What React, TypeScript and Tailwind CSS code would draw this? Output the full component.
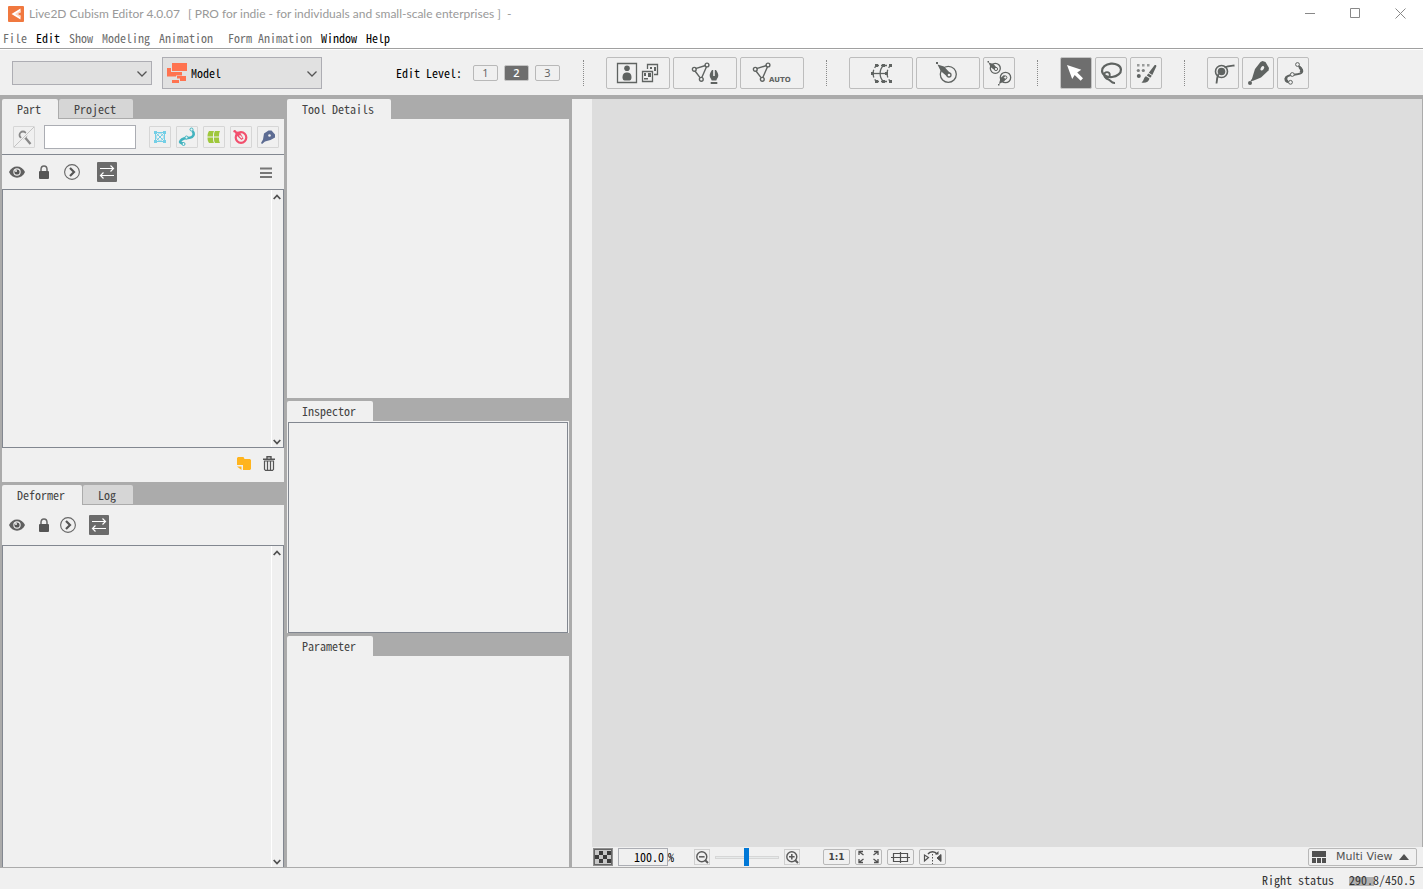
import type { ReactNode } from "react";

const MONO = "font-['Noto_Sans_Mono_CJK_JP','Noto_Sans_CJK_JP',monospace]";
const INK = "#5f6361";

function Glyph({ w, h, children, className = "" }: { w: number; h: number; children: ReactNode; className?: string }) {
  return (
    <svg width={w} height={h} viewBox={`0 0 ${w} ${h}`} fill="none" aria-hidden="true" className={`shrink-0 ${className}`}>
      {children}
    </svg>
  );
}

/* ---------- title bar and menu ---------- */

function TitleBar() {
  return (
    <header className="flex h-[27px] items-center bg-white pl-2 font-['Lato',sans-serif] text-xs text-[#999]">
      <Glyph w={16} h={16}>
        <rect width="16" height="16" rx="1" fill="#f0783f" />
        <path d="M3.500 8 12.500 2.500v4L9 8l3.500 1.500v4z" fill="#fff" />
        <path d="M7 8l5.500-3.500v2L9 8l3.500 1.500v2z" fill="#fbd3bf" />
      </Glyph>
      <h1 className="flex flex-1 gap-2 pl-[5px] whitespace-pre">
        <span>Live2D Cubism Editor 4.0.07</span>
        <span>[ PRO for indie - for individuals and small-scale enterprises ]  -</span>
      </h1>
      <div className="flex text-[#888]">
        <button aria-label="Minimize" className="flex h-[27px] w-[45px] items-center justify-center">
          <Glyph w={10} h={11}><path d="M0 5.500h10" stroke="currentColor" /></Glyph>
        </button>
        <button aria-label="Maximize" className="flex h-[27px] w-[46px] items-center justify-center">
          <Glyph w={11} h={11}><path d="M.5.5h9v9h-9z" stroke="currentColor" /></Glyph>
        </button>
        <button aria-label="Close" className="flex h-[27px] w-[45px] items-center justify-center">
          <Glyph w={11} h={11}><path d="M.5.5l10 10M10.5.5l-10 10" stroke="currentColor" /></Glyph>
        </button>
      </div>
    </header>
  );
}

function MenuBar() {
  const off = "text-[#6d6d6d]";
  return (
    <nav className="flex h-[21px] items-center gap-[9px] bg-white pl-[3px] text-black">
      <button className={off}>File</button>
      <button>Edit</button>
      <button className={off}>Show</button>
      <button className={off}>Modeling</button>
      <button className={off}>Animation</button>
      <button className={`${off} pl-1.5`}>Form Animation</button>
      <button>Window</button>
      <button>Help</button>
    </nav>
  );
}

/* ---------- main toolbar ---------- */

function ToolButton({ label, wide, active, children }: { label: string; wide?: boolean; active?: boolean; children: ReactNode }) {
  return (
    <button
      aria-label={label}
      className={`flex h-8 shrink-0 items-center justify-center rounded-[2px] border ${wide ? "w-16" : "w-8"} ${
        active ? "border-[#c4c4c4] bg-[#6e6e6e]" : "border-[#bdbdbd] bg-[#f0f0f0]"
      }`}
    >
      <svg
        width={wide ? 62 : 30}
        height="30"
        viewBox={wide ? "1 1 62 30" : "1 1 30 30"}
        fill="none"
        stroke={INK}
        strokeWidth="1.3"
        aria-hidden="true"
        className="shrink-0"
      >
        {children}
      </svg>
    </button>
  );
}

function Divider() {
  return <div className="mx-[22px] h-[26px] shrink-0 border-l border-dotted border-[#8a8a8a]" />;
}

function Chevron() {
  return (
    <Glyph w={10} h={6} className="pointer-events-none absolute top-1/2 right-[5px] -mt-[2px]">
      <path d="M.5.5 5 5 9.500.5" stroke="#555" strokeWidth="1.300" />
    </Glyph>
  );
}

function Level({ n, active }: { n: number; active?: boolean }) {
  return (
    <button
      aria-pressed={!!active}
      className={`flex h-4 w-[25px] items-center justify-center rounded-[2px] border font-['Open_Sans',sans-serif] text-[11px] ${
        active ? "border-[#c4c4c4] bg-[#6e6e6e] font-semibold text-white" : "border-[#b8b8b8] text-[#5f5f5f]"
      }`}
    >
      {n}
    </button>
  );
}

function Mesh({ x }: { x: number }) {
  return (
    <g transform={`translate(${x} 0)`} strokeWidth="1.4">
      <path d="M1.500 11.700 11.500 8.500M12.500 9.700 7.800 20.500M1 14 6 20.700" />
      <circle cx="0.300" cy="12.300" r="1.900" />
      <circle cx="13" cy="8" r="1.900" />
      <circle cx="7.300" cy="22.300" r="1.900" />
    </g>
  );
}

function Toolbar() {
  return (
    <div className="flex h-[46px] items-center border-t border-white bg-[#f0f0f0] pl-3">
      <div className="relative">
        <select aria-label="Workspace" className="block h-6 w-[140px] appearance-none border border-[#adadb3] bg-[#e1e1e1]" />
        <Chevron />
      </div>
      <div className="relative ml-2.5">
        <select aria-label="Editing mode" className="block h-8 w-40 appearance-none border border-[#adadb3] bg-[#e1e1e1] pl-7 text-black">
          <option>Model</option>
        </select>
        <Glyph w={20} h={20} className="pointer-events-none absolute top-1.5 left-[5px]">
          <path d="M5 0h15v8H5z" fill="#ff7350" />
          <path d="M0 5h4v4h11v3.500H9v1H0zM10 13h9v5h-6v-2.500h-3zM5 17h7v3H5z" fill="#ff7350" />
        </Glyph>
        <Chevron />
      </div>
      <span className="ml-[74px] text-black">Edit Level:</span>
      <div className="mr-px ml-[11px] flex gap-1.5">
        <Level n={1} />
        <Level n={2} active />
        <Level n={3} />
      </div>
      <Divider />
      <div className="flex gap-[3px]">
        <ToolButton wide label="Texture atlas">
          <path d="M11.500 6.500h19v19h-19z" />
          <g fill={INK} stroke="none">
            <circle cx="21" cy="11.300" r="2.800" />
            <path d="M16.500 20.500c0-4 2-5 4.500-5s4.500 1 4.500 5c0 2-1 3-2 3h-5c-1 0-2-1-2-3z" />
            <path d="M48 10h2v4h-2zM44 10h2v2h-2zM38 16h2v3h-2zM42 16h3v4h-3zM38 21h4v1.500h-4z" />
          </g>
          <path d="M41.500 12V7.500h10v10H48M36.500 14.500h10v10h-10z" />
        </ToolButton>
        <ToolButton wide label="Edit mesh manually">
          <Mesh x={21} />
          <g fill={INK} stroke="none">
            <path d="M39 13c-1.500 2-2.300 4-2.300 5.500 0 2 1.500 3.300 2 5h4.600c.5-1.700 2-3 2-5 0-1.500-.8-3.500-2.300-5.500h-1.200v6h-1.600v-6z" />
            <path d="M37.700 25h6.600v2h-6.600z" />
          </g>
        </ToolButton>
        <ToolButton wide label="Auto mesh">
          <Mesh x={15} />
          <text x="29" y="25" fontFamily="DejaVu Sans, sans-serif" fontSize="7" fontWeight="700" fill={INK} stroke="none">AUTO</text>
        </ToolButton>
      </div>
      <Divider />
      <div className="flex gap-[3px]">
        <ToolButton wide label="Create warp deformer">
          <path d="M28 8.500h14M28 24.500h14" strokeDasharray="2 2" />
          <path d="M23 16.500h15" />
          <path d="M34.500 8.500c-4.500 4-4.500 12 0 16" />
          <path d="M27.500 8.500c-4.500 4-4.500 12 0 16M41.500 8.500c-4.500 4-4.500 12 0 16" strokeDasharray="3 2" />
          <path d="M26 7h3v3h-3zM33 7h3v3h-3zM40 7h3v3h-3zM22 15h3v3h-3zM36 15h3v3h-3zM26 23h3v3h-3zM33 23h3v3h-3zM40 23h3v3h-3z" fill={INK} stroke="none" />
        </ToolButton>
        <ToolButton wide label="Create rotation deformer">
          <circle cx="32.300" cy="17.300" r="8" />
          <path d="M20 5h2v2h-2zM21.500 7.500 28 9.500l6.500 7-2.800 3.500-7-6z" fill={INK} stroke="none" />
          <circle cx="33" cy="18" r="2" fill="#f0f0f0" />
        </ToolButton>
        <ToolButton label="Rotation deformer chain">
          <circle cx="12.300" cy="11.300" r="5" />
          <circle cx="22.500" cy="20.500" r="5.200" />
          <path d="M4.500 4h1.500v1.500H4.500zM5.500 5.500l5 1.500 3.500 4-2 2.500-4.500-3.500zM15 27h1.500v1.500H15zM16 27l1.500-6 3.500-3 3 3-3 3.500z" fill={INK} stroke="none" />
          <circle cx="13" cy="12" r="1.600" fill="#f0f0f0" strokeWidth="1" />
          <circle cx="22.300" cy="20.500" r="1.600" fill="#f0f0f0" strokeWidth="1" />
        </ToolButton>
      </div>
      <Divider />
      <div className="flex gap-[3px]">
        <ToolButton label="Arrow" active>
          <path d="M7 8l14.300 4.800-4.100 2.700 5.800 5.800-2.300 2.500-6-5.900-2.500 4z" fill="#fff" stroke="none" />
        </ToolButton>
        <ToolButton label="Lasso select">
          <ellipse cx="16.500" cy="13.300" rx="9.500" ry="6.700" strokeWidth="2.200" transform="rotate(-5 16.500 13.300)" />
          <circle cx="12" cy="18" r="2.800" strokeWidth="1.800" />
          <path d="M10.500 20.500c1.500 2.300 3 1.500 4.500 3s2.500 2.700 5 2.500" strokeWidth="2" />
        </ToolButton>
        <ToolButton label="Brush select">
          <g fill={INK} stroke="none">
            <path d="M7 7h2.500v2.500H7zM12 7h2.500v2.500H12zM17 7h2.500v2.500H17z" opacity=".6" />
            <circle cx="8.300" cy="13.500" r="1.600" opacity=".8" />
            <circle cx="13.300" cy="13.500" r="1.600" opacity=".8" />
            <circle cx="8.800" cy="19" r="2" />
            <path d="M24.500 8.200c1-.8 2.300 0 1.800 1.300L22.300 18l-3.500-2.200zM18.300 16.500l3.500 2.200-1.500 2-3.500-2.200zM16 19.300l3.500 2.200c-.7 3.500-3.800 4.700-8 4 2.500-1.500 2-5 4.500-6.200z" />
          </g>
        </ToolButton>
      </div>
      <Divider />
      <div className="flex gap-[3px]">
        <ToolButton label="Glue">
          <circle cx="14.500" cy="14.500" r="6" strokeWidth="1.600" />
          <circle cx="14.500" cy="14.500" r="3.800" fill={INK} stroke="none" />
          <path d="M9.500 26.500c.3-4 .8-7 2-9.500M17.500 10.500c3-1.300 6-1.500 10-2" strokeWidth="1.800" />
        </ToolButton>
        <ToolButton label="Pen">
          <path d="M18.500 5 20.500 4l3 1 3.500 6-.5 2.500-7.500 7L10.500 24l-.8-1.200L13 12z" fill={INK} stroke="none" />
          <ellipse cx="20.300" cy="11.300" rx="1.500" ry="2.500" fill="#f0f0f0" stroke="none" transform="rotate(35 20.300 11.300)" />
          <path d="M9 24l4-4" />
          <circle cx="8" cy="26" r="2" fill={INK} stroke="none" />
        </ToolButton>
        <ToolButton label="Deform path">
          <path d="M21.500 9c3 2 4.500 4.500 3.300 6.500s-6 1.700-9 2.200-7 1.500-7.300 4 2 3.800 4.500 3.800" strokeWidth="2" />
          <path d="M22.500 10c2.500 3 2.500 4 1 5.500M9.500 20c-1 2-.5 4 1.500 4.500" strokeWidth="2.600" />
          <g fill="#f0f0f0" strokeWidth="1">
            <circle cx="20.500" cy="7.500" r="1.900" />
            <circle cx="15.300" cy="17.500" r="1.900" />
            <circle cx="13.500" cy="25.300" r="1.900" />
          </g>
        </ToolButton>
      </div>
    </div>
  );
}

/* ---------- dock panels ---------- */

function Tab({ children, selected, width }: { children: string; selected?: boolean; width: string }) {
  return (
    <button
      role="tab"
      aria-selected={!!selected}
      className={`${width} rounded-t-[2px] pl-[15px] text-left text-[#444] ${
        selected ? "h-5 bg-[#f0f0f0]" : "mb-px h-[19px] bg-[#d6d6d6]"
      }`}
    >
      {children}
    </button>
  );
}

function Tabs({ children }: { children: ReactNode }) {
  return <div role="tablist" className="flex h-5 shrink-0 gap-px bg-[#ababab]">{children}</div>;
}

function SmallButton({ label, children }: { label: string; children: ReactNode }) {
  return (
    <button aria-label={label} className="flex size-[22px] shrink-0 items-center justify-center rounded-[1px] border border-[#d6d6d6]">
      <Glyph w={20} h={20}>{children}</Glyph>
    </button>
  );
}

function TreeBox({ className }: { className: string }) {
  return (
    <div className={`flex justify-end border border-[#828790] ${className}`}>
      <div className="flex w-3 flex-col items-center justify-between border-l border-white pt-1 pr-px pb-0.5">
        <Glyph w={8} h={6}><path d="M.7 5 4 1.500 7.300 5" stroke="#505050" strokeWidth="1.800" /></Glyph>
        <Glyph w={8} h={6}><path d="M.7 1 4 4.500 7.300 1" stroke="#505050" strokeWidth="1.800" /></Glyph>
      </div>
    </div>
  );
}

function EyeIcon() {
  return (
    <Glyph w={16} h={12}>
      <path d="M0 6c3-7.500 13-7.500 16 0-3 7.500-13 7.500-16 0z" fill="#606060" />
      <circle cx="8" cy="6" r="3.700" fill="#f0f0f0" />
      <circle cx="8" cy="6" r="2.600" fill="#555" />
      <circle cx="7" cy="5" r="1" fill="#f0f0f0" />
    </Glyph>
  );
}

function LockIcon() {
  return (
    <Glyph w={10} h={14}>
      <path d="M2 7V4.500a3 3.500 0 0 1 6 0V7" stroke="#666" strokeWidth="1.500" />
      <rect y="6" width="10" height="8" rx="1" fill="#555" />
    </Glyph>
  );
}

function ExpandIcon() {
  return (
    <Glyph w={16} h={16}>
      <circle cx="8" cy="8" r="7.400" stroke="#666" strokeWidth="1.100" />
      <path d="M6 4l4 4-4 4" stroke="#555" strokeWidth="2.200" />
    </Glyph>
  );
}

function SwapIcon() {
  return (
    <Glyph w={20} h={20}>
      <rect width="20" height="20" rx="1" fill="#6b6b6b" />
      <path d="M3 6.500h13.500M13.500 3.500l3 3-3 3M17 13.500H3.500M6.500 10.500l-3 3 3 3" stroke="#fff" strokeWidth="1.200" />
    </Glyph>
  );
}

function PartPanel() {
  return (
    <section className="flex h-[383px] flex-col bg-[#f0f0f0]">
      <Tabs>
        <Tab selected width="w-14">Part</Tab>
        <Tab width="w-[74px]">Project</Tab>
      </Tabs>
      <div className="flex h-9 shrink-0 items-center border-b border-[#828790] pl-[11px]">
        <SmallButton label="Search">
          <circle cx="9" cy="8" r="3.500" stroke="#888" strokeWidth="1.800" />
          <path d="M11.500 11l5 6" stroke="#888" strokeWidth="2.300" />
          <path d="M0 20 20 0" stroke="#f0f0f0" strokeWidth="3" />
          <path d="M0 20 20 0" stroke="#c4c4c4" />
        </SmallButton>
        <input aria-label="Filter parts" className="ml-[9px] h-6 w-[92px] border border-[#abadb3] bg-white px-1 outline-none" />
        <div className="ml-[13px] flex gap-[5px]">
          <SmallButton label="Art mesh">
            <path d="M5.500 5.500h9v9h-9zM5.500 5.500l9 9M14.500 5.500l-9 9M10 5.500 14.500 10 10 14.500 5.500 10z" stroke="#74cfe6" />
            <path d="M4 4h3v3H4zM13 4h3v3h-3zM4 13h3v3H4zM13 13h3v3h-3z" fill="#74cfe6" />
          </SmallButton>
          <SmallButton label="Deform path">
            <path d="M15.500 4c1.700 2 1.700 4.500-.5 6s-5 .5-8 1.500-4.500 3-3.500 4 2 1 3.500 1" stroke="#42b3bf" strokeWidth="2.600" />
            <g fill="#e6f6f7" stroke="#42b3bf"><circle cx="14.500" cy="2.500" r="1.500" /><circle cx="9.500" cy="10.500" r="1.500" /><circle cx="6.500" cy="17" r="1.500" /></g>
          </SmallButton>
          <SmallButton label="Warp deformer">
            <path d="M5 4h5c-1 2-1 3.500-1 5.500H3.500C3.500 7 4 5.500 5 4zM11 4h5c-1 2-1 3.500-1 5.500h-5c0-2.500 0-3.500 1-5.500zM3.500 10.500H9c0 2 0 4 1 5.500H5c-1-1.500-1.500-3-1.500-5.500zM10 10.500h5c0 2 0 4 1 5.500h-5c-1-1.500-1-3-1-5.500z" fill="#9fc83c" />
          </SmallButton>
          <SmallButton label="Rotation deformer">
            <circle cx="10" cy="10.500" r="5.300" stroke="#f2506e" strokeWidth="2.200" />
            <path d="M3 3.500l6 2 3.500 6-2 1.500L5 8z" fill="#f2506e" />
            <circle cx="3.700" cy="4.300" r="1.300" fill="#f2506e" />
            <path d="M8.500 8.500l2.500 2.500" stroke="#f0f0f0" strokeWidth="1.300" />
          </SmallButton>
          <SmallButton label="Glue">
            <path d="M6 6.500 10.500 3.500h3l3.500 4v3L12.500 13l-5.500 1.500L4 17l-1-1 2-3.500z" fill="#5d6c93" />
            <circle cx="11.500" cy="8.500" r="1.300" fill="#f0f0f0" />
          </SmallButton>
        </div>
      </div>
      <div className="flex h-[34px] shrink-0 items-center pl-[7px]">
        <button aria-label="Visibility"><EyeIcon /></button>
        <button aria-label="Lock" className="ml-3.5"><LockIcon /></button>
        <button aria-label="Expand" className="ml-[15px]"><ExpandIcon /></button>
        <button aria-label="Synchronize" className="ml-[17px]"><SwapIcon /></button>
        <button aria-label="Panel menu" className="mr-3 ml-auto">
          <Glyph w={12} h={12}><path d="M0 2.500h12M0 7h12M0 11h12" stroke="#777" strokeWidth="1.800" /></Glyph>
        </button>
      </div>
      <TreeBox className="flex-1" />
      <div className="flex h-[34px] shrink-0 items-center justify-end gap-[11px] pr-[9px] pb-[3px]">
        <button aria-label="New folder">
          <Glyph w={15} h={14}>
            <path d="M1 0h5.500l1 2H13l1 1v9l-1 1H6V8H0V1z" fill="#ffb41e" />
            <path d="M0 9.500h4.500V13z" fill="#ffb41e" />
          </Glyph>
        </button>
        <button aria-label="Delete">
          <Glyph w={12} h={15}>
            <path d="M4 2.500V.7h4v1.800M0 3.300h12" stroke="#555" strokeWidth="1.400" />
            <path d="M1.500 5v8.300l1 1h7l1-1V5zM4.500 5.500v8.500M7.500 5.500v8.500" stroke="#555" strokeWidth="1.200" />
          </Glyph>
        </button>
      </div>
    </section>
  );
}

function DeformerPanel() {
  return (
    <section className="flex flex-1 flex-col bg-[#f0f0f0]">
      <Tabs>
        <Tab selected width="w-20">Deformer</Tab>
        <Tab width="w-[50px]">Log</Tab>
      </Tabs>
      <div className="flex h-10 shrink-0 items-center pl-[7px]">
        <button aria-label="Visibility"><EyeIcon /></button>
        <button aria-label="Lock" className="ml-3.5"><LockIcon /></button>
        <button aria-label="Expand" className="ml-[11px]"><ExpandIcon /></button>
        <button aria-label="Synchronize" className="ml-[13px]"><SwapIcon /></button>
      </div>
      <TreeBox className="flex-1 border-b-0" />
    </section>
  );
}

/* ---------- canvas and view bar ---------- */

function ViewButton({ label, children }: { label: string; children: ReactNode }) {
  return (
    <button aria-label={label} className="flex h-4 w-[27px] items-center justify-center rounded-[2px] border border-[#b8b8b8]">
      <svg width="25" height="14" viewBox="0 0 25 14" fill="none" stroke="#505050" aria-hidden="true">{children}</svg>
    </button>
  );
}

function ZoomButton({ label, plus }: { label: string; plus?: boolean }) {
  return (
    <button aria-label={label} className="flex size-4 items-center justify-center border border-[#cfcfcf]">
      <Glyph w={14} h={14}>
        <circle cx="6.800" cy="6.800" r="5" stroke="#5a5a5a" strokeWidth="1.400" />
        <path d={plus ? "M4 6.800h5.600M6.800 4v5.600" : "M4 6.800h5.600"} stroke="#5a5a5a" strokeWidth="1.500" />
        <path d="M10 10l3 3" stroke="#5a5a5a" strokeWidth="2" />
      </Glyph>
    </button>
  );
}

function ViewBar() {
  const cells = [0, 1, 2].flatMap((r) => [0, 1, 2, 3].filter((c) => (r + c) % 2 === 1).map((c) => [c, r]));
  return (
    <div className="flex h-5 shrink-0 items-center bg-[#f0f0f0] pr-1.5 pl-[21px]">
      <button aria-label="Transparency grid">
        <Glyph w={20} h={18}>
          <rect width="20" height="18" fill="#8f8f8f" />
          <rect x="1.500" y="1.500" width="17" height="15" fill="#c8c8c8" stroke="#666" />
          {cells.map(([c, r]) => (
            <rect key={`${c}-${r}`} x={2 + c * 4} y={3 + r * 4} width="4" height="4" fill="#3c3c3c" />
          ))}
        </Glyph>
      </button>
      <input aria-label="Zoom percent" defaultValue="100.0" className="ml-[5px] h-[18px] w-[50px] border border-[#abadb3] pr-[3px] pb-0.5 text-right text-black outline-none" />
      <span className="text-black">%</span>
      <div className="ml-5 flex items-center gap-[5px]">
        <ZoomButton label="Zoom out" />
        <input
          type="range"
          aria-label="Zoom"
          defaultValue={49}
          className="h-[18px] w-16 appearance-none bg-transparent [&::-webkit-slider-runnable-track]:h-[3px] [&::-webkit-slider-runnable-track]:border [&::-webkit-slider-runnable-track]:border-[#d6d6d6] [&::-webkit-slider-runnable-track]:bg-[#e7eaea] [&::-webkit-slider-thumb]:-mt-[9px] [&::-webkit-slider-thumb]:h-[18px] [&::-webkit-slider-thumb]:w-[5px] [&::-webkit-slider-thumb]:appearance-none [&::-webkit-slider-thumb]:bg-[#0078d7]"
        />
        <ZoomButton label="Zoom in" plus />
      </div>
      <div className="ml-[23px] flex gap-[5px]">
        <button className="flex h-4 w-[27px] items-center justify-center rounded-[2px] border border-[#b8b8b8] font-['DejaVu_Sans',sans-serif] text-[9px] font-bold text-[#444]">1:1</button>
        <ViewButton label="Fit to window">
          <path d="M3 5V1.500h4M3.500 2l4 3M18 1.500h4V5M21.500 2l-4 3M3 9v3.500h4M3.500 12l4-3M22 9v3.500h-4M21.500 12l-4-3" strokeWidth="1.300" />
        </ViewButton>
        <ViewButton label="Guide frame"><path d="M5.500 3.500h14v8h-14zM3 7.500h19M12.500 2v11" strokeWidth="1.200" /></ViewButton>
        <ViewButton label="Flip view">
          <path d="M4.500 5v6l4-3.500z" strokeWidth="1.200" />
          <path d="M21 4.500v7l-4-3.500z" fill="#505050" />
          <path d="M12.500 4v10" strokeDasharray="1.500 1.500" />
          <path d="M8 4c2-3 7-3 9 0" strokeWidth="1.400" />
          <path d="M15 4.500h3.500V1z" fill="#505050" stroke="none" />
        </ViewButton>
      </div>
      <button className="ml-auto flex h-[18px] w-[109px] items-center rounded-[2px] border border-[#b8b8b8] pl-[3px] font-['DejaVu_Sans',sans-serif] text-[11px] text-[#505050]">
        <Glyph w={14} h={12}><path d="M0 0h14v6H0zM0 7h4v5H0zM5 7h4v5H5zM10 7h4v5h-4z" fill="#505050" /></Glyph>
        <span className="ml-2.5">Multi View</span>
        <Glyph w={10} h={6} className="mr-[7px] ml-auto"><path d="M0 6 5 0l5 6z" fill="#505050" /></Glyph>
      </button>
    </div>
  );
}

export default function App() {
  return (
    <div className={`flex min-h-screen flex-col overflow-hidden bg-[#f0f0f0] text-xs leading-4 ${MONO}`}>
      <TitleBar />
      <MenuBar />
      <div className="border-t border-[#a0a0a0]"><Toolbar /></div>
      <div className="h-1 bg-[#ababab]" />
      <main className="flex flex-1 border-b border-[#ababab] bg-[#ababab]">
        <div className="flex w-[285px] shrink-0 flex-col gap-[3px] border-r border-l-2 border-[#ababab]">
          <PartPanel />
          <DeformerPanel />
        </div>
        <div className="ml-0.5 flex w-[282px] shrink-0 flex-col gap-[3px]">
          <section className="flex h-[299px] flex-col bg-[#f0f0f0]">
            <Tabs><Tab selected width="w-[104px]">Tool Details</Tab></Tabs>
          </section>
          <section className="flex h-[232px] flex-col bg-[#f0f0f0]">
            <Tabs><Tab selected width="w-[86px]">Inspector</Tab></Tabs>
            <div className="mx-px mt-px flex-1 border border-[#828790]" />
          </section>
          <section className="flex flex-1 flex-col bg-[#f0f0f0]">
            <Tabs><Tab selected width="w-[86px]">Parameter</Tab></Tabs>
          </section>
        </div>
        <div className="ml-[3px] flex min-w-0 flex-1 flex-col bg-[#f0f0f0]">
          <div className="ml-5 flex-1 border-r border-[#ababab] bg-[#ddd]" />
          <ViewBar />
        </div>
      </main>
      <footer className="flex h-[21px] items-center justify-end gap-[15px] pt-0.5 pr-2 text-[#333]">
        <span>Right status</span>
        <span className="bg-[linear-gradient(#b0b0b0,#b0b0b0)] bg-[length:25px_9px] bg-[position:0_5px] bg-no-repeat">290.8/450.5</span>
      </footer>
    </div>
  );
}
